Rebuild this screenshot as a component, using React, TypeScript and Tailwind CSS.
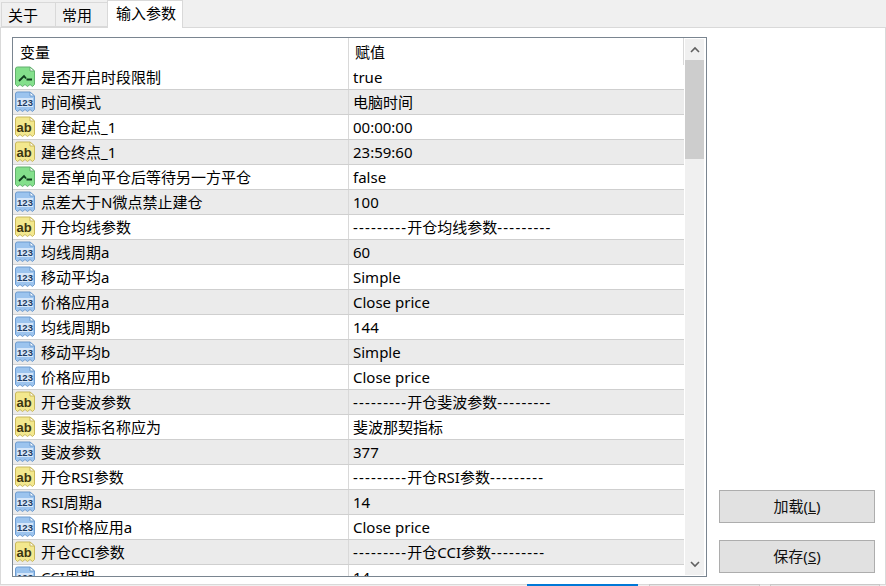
import type { ReactNode } from 'react';

type Kind = 'bool' | 'num' | 'str';

const rows: [Kind, string, string][] = [
  ['bool', '是否开启时段限制', 'true'],
  ['num', '时间模式', '电脑时间'],
  ['str', '建仓起点_1', '00:00:00'],
  ['str', '建仓终点_1', '23:59:60'],
  ['bool', '是否单向平仓后等待另一方平仓', 'false'],
  ['num', '点差大于N微点禁止建仓', '100'],
  ['str', '开仓均线参数', '---------开仓均线参数---------'],
  ['num', '均线周期a', '60'],
  ['num', '移动平均a', 'Simple'],
  ['num', '价格应用a', 'Close price'],
  ['num', '均线周期b', '144'],
  ['num', '移动平均b', 'Simple'],
  ['num', '价格应用b', 'Close price'],
  ['str', '开仓斐波参数', '---------开仓斐波参数---------'],
  ['str', '斐波指标名称应为', '斐波那契指标'],
  ['num', '斐波参数', '377'],
  ['str', '开仓RSI参数', '---------开仓RSI参数---------'],
  ['num', 'RSI周期a', '14'],
  ['num', 'RSI价格应用a', 'Close price'],
  ['str', '开仓CCI参数', '---------开仓CCI参数---------'],
  ['num', 'CCI周期', '14'],
];

const iconColors: Record<Kind, { fill: string; stroke: string }> = {
  bool: { fill: '#84e08c', stroke: '#63b06f' },
  num: { fill: '#9cc4ee', stroke: '#6d9bcf' },
  str: { fill: '#f3e88e', stroke: '#c9b85c' },
};

// little document with a wavy bottom edge, the glyph inside depends on the type
function TypeIcon({ kind }: { kind: Kind }) {
  const c = iconColors[kind];
  return (
    <svg width="22" height="22" viewBox="0 0 22 22" className="shrink-0">
      <path
        d="M1.5 3 Q1.5 1 3.5 1 H16 L20.5 5 V18.5 L18.5 20.5 L16 18.5 L13.5 20.5 L11 18.5 L8.5 20.5 L6 18.5 L3.5 20.5 L1.5 18.5 Z"
        fill={c.fill}
        stroke={c.stroke}
      />
      <path d="M16 1 V5 H20.5 Z" fill="#ffffff" stroke={c.stroke} />
      {kind === 'bool' && (
        <path d="M5 15 L10 10 L12 12.5 M12.5 13.5 H18" fill="none" stroke="#0f3d1e" strokeWidth="1.8" />
      )}
      {kind === 'num' && (
        <>
          <rect x="3" y="7" width="16" height="9" fill="#e6f0fb" opacity="0.8" />
          <text x="11" y="15" textAnchor="middle" fontFamily="Liberation Sans" fontWeight="700" fontSize="9.5" fill="#1d3b60">
            123
          </text>
        </>
      )}
      {kind === 'str' && (
        <text x="10" y="15.5" textAnchor="middle" fontFamily="Liberation Sans" fontWeight="700" fontSize="13" fill="#3d3712">
          ab
        </text>
      )}
    </svg>
  );
}

function Tab({ active, className, children }: { active?: boolean; className: string; children: ReactNode }) {
  return (
    <div
      className={
        active
          ? `pl-[8px] pt-[1px] bg-white border border-b-0 border-[#d9d9d9] text-[15px] ${className}`
          : `h-[25px] mt-[2px] pl-[6px] pt-[1px] bg-[#f0f0f0] border border-[#d9d9d9] text-[15px] ${className}`
      }
    >
      {children}
    </div>
  );
}

function Button({ children }: { children: ReactNode }) {
  return (
    <div className="w-[156px] h-[33px] flex items-center justify-center bg-[#e1e1e1] border border-[#adadad] text-[15px] text-[#111]">
      {children}
    </div>
  );
}

// the dashes around the section titles are wider in the reference font
function Value({ text }: { text: string }) {
  const m = text.match(/^(-+)(.*?)(-+)$/);
  if (!m) return <>{text}</>;
  return (
    <>
      <span className="tracking-[1.2px]">{m[1]}</span>
      {m[2]}
      <span className="tracking-[1.2px]">{m[3]}</span>
    </>
  );
}

export default function App() {
  return (
    <div
      className="w-[886px] h-[586px] overflow-hidden flex flex-col bg-[#f0f0f0] text-black"
      style={{ fontFamily: '"Noto Sans", "Noto Sans CJK SC", sans-serif' }}
    >
      <div className="h-[28px] flex items-start border-b border-[#d9d9d9] shrink-0 relative z-10">
        <Tab className="w-[55px] ml-[1px]">关于</Tab>
        <Tab className="w-[53px] -ml-px">常用</Tab>
        <Tab active className="w-[76px] -ml-px h-[28px]">
          输入参数
        </Tab>
      </div>
      <div className="h-[556px] shrink-0 flex bg-white border-l border-r border-[#d9d9d9] pt-[9px] pl-[11px]">
        <div className="w-[695px] h-[540px] border border-[#7a8590] flex overflow-hidden shrink-0">
          <div className="w-[671px] shrink-0">
            <div className="h-[27px] flex items-center text-[15px]">
              <div className="w-[335px] pl-[7px] pt-[2px] shrink-0">变量</div>
              <div className="flex-1 pl-[6px] pt-[2px] border-l border-r border-[#d9d9d9] h-full flex items-center">赋值</div>
            </div>
            {rows.map(([kind, name, value], i) => (
              <div
                key={i}
                className={`h-[25px] flex border-b border-[#cfcfcf] text-[15px] leading-[25px] ${
                  i % 2 === 1 ? 'bg-[#ebebeb]' : 'bg-white'
                }`}
              >
                <div className="w-[335px] flex items-center pl-[1px] gap-[5px] shrink-0">
                  <TypeIcon kind={kind} />
                  <span className="whitespace-nowrap">{name}</span>
                </div>
                <div className="pl-[4px] border-l border-[#d9d9d9] whitespace-nowrap">
                  <Value text={value} />
                </div>
              </div>
            ))}
          </div>
          <div className="w-[19px] ml-[1px] mt-px mb-px bg-[#f0f0f0] flex flex-col shrink-0">
            <div className="h-[21px] flex items-center justify-center shrink-0">
              <svg width="10" height="7" viewBox="0 0 10 7">
                <path d="M1 6 L5 2 L9 6" fill="none" stroke="#606060" strokeWidth="1.6" />
              </svg>
            </div>
            <div className="h-[99px] bg-[#cdcdcd] shrink-0" />
            <div className="flex-1" />
            <div className="h-[21px] flex items-center justify-center shrink-0">
              <svg width="10" height="7" viewBox="0 0 10 7">
                <path d="M1 1 L5 5 L9 1" fill="none" stroke="#606060" strokeWidth="1.6" />
              </svg>
            </div>
          </div>
        </div>
        <div className="flex-1 flex flex-col items-end justify-end pr-[10px] pb-[11px] gap-[17px]">
          <Button>
            加载(<span className="underline">L</span>)
          </Button>
          <Button>
            保存(<span className="underline">S</span>)
          </Button>
        </div>
      </div>
      <div className="flex-1 flex items-start bg-[#f0f0f0] border-t border-[#d9d9d9] relative">
        <div className="w-[527px]" />
        <div className="w-[111px] h-[3px] -mt-px bg-[#0078d7]" />
        <div className="w-[111px] h-[3px] ml-[11px] -mt-px border-t border-x border-[#c8c8c8] bg-[#e6e6e6]" />
        <div className="w-[110px] h-[3px] ml-[10px] -mt-px border-t border-x border-[#c8c8c8] bg-[#e6e6e6]" />
      </div>
    </div>
  );
}
